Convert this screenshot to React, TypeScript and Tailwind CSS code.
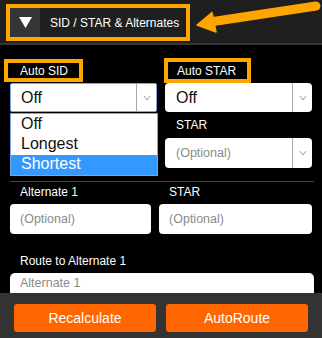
import React from "react";

function Chevron() {
  return (
    <svg width="8" height="6" viewBox="0 0 8 6" className="block">
      <polyline points="1,1 4,5 7,1" fill="none" stroke="#9a9a9a" strokeWidth="1" />
    </svg>
  );
}

export default function App() {
  return (
    <div className="relative w-[322px] h-[338px] overflow-hidden bg-black font-['Liberation_Sans',Arial,sans-serif] text-[12px]">
      {/* Header */}
      <div className="h-[45px] bg-[#1f1f1f] border-b-2 border-[#363636] pt-[4px] pl-[6px]">
        <div className="flex h-[37px] w-[184px] items-stretch border-[4px] border-[#ffa500]">
          <div className="flex w-[30px] items-center justify-center bg-[#353535]">
            <svg width="13" height="11" viewBox="0 0 13 11" className="block">
              <polygon points="0,0 13,0 6.5,11" fill="#ffffff" />
            </svg>
          </div>
          <div className="flex items-center pl-[10px] text-[12px] leading-[14px] text-white">
            SID / STAR &amp; Alternates
          </div>
        </div>
      </div>

      {/* Arrow annotation */}
      <svg
        className="absolute left-[190px] top-0"
        width="132"
        height="45"
        viewBox="0 0 132 45"
      >
        <line x1="20" y1="22" x2="126" y2="6" stroke="#ffa500" strokeWidth="9" strokeLinecap="round" />
        <polygon points="7,25 22,12.5 26,32" fill="#ffa500" stroke="#ffa500" strokeWidth="1.5" strokeLinejoin="round" />
      </svg>

      {/* Body */}
      <div className="h-[248px] overflow-hidden px-[10px]">
        {/* Auto label row */}
        <div className="flex h-[38px] items-start pt-[13px]">
          <div className="-ml-[6px] mt-[1px] flex h-[23px] w-[79px] items-center border-[4px] border-[#ffa500] bg-black pl-[12px] leading-[14px] text-white">
            Auto SID
          </div>
          <div className="ml-[81px] flex h-[25px] w-[87px] items-center border-[4px] border-[#ffa500] bg-black pl-[9px] leading-[14px] text-white">
            Auto STAR
          </div>
        </div>

        {/* Selects */}
        <div className="flex items-start gap-[8px]">
          <div className="w-[148px]">
            <div className="relative">
              <div className="flex h-[29px] items-stretch rounded-[2px] border border-[#7ea6e0] bg-white">
                <div className="flex flex-1 items-center pl-[10px] text-[16px] leading-[18px] text-[#111]">Off</div>
                <div className="flex w-[20px] items-center justify-center border-l border-[#a8a8a8]">
                  <Chevron />
                </div>
              </div>
              <div className="absolute left-0 top-full z-10 mt-[1px] w-[148px] border border-[#7ea6e0] bg-white pt-[1px] text-[16px] leading-[18px]">
                <div className="h-[20px] pl-[10px] text-[#111]">Off</div>
                <div className="h-[20px] pl-[10px] text-[#111]">Longest</div>
                <div className="h-[20px] bg-[#3399ff] pl-[10px] text-white">Shortest</div>
              </div>
            </div>
          </div>
          <div className="w-[148px]">
            <div className="flex h-[29px] items-stretch rounded-[4px] bg-white">
              <div className="flex flex-1 items-center pl-[11px] text-[16px] leading-[18px] text-[#111]">Off</div>
              <div className="flex w-[20px] items-center justify-center border-l border-[#a8a8a8]">
                <Chevron />
              </div>
            </div>
            <div className="mt-[6px] mb-[6px] pl-[11px] leading-[14px] text-white">STAR</div>
            <div className="flex h-[30px] items-stretch rounded-[4px] bg-white">
              <div className="flex flex-1 items-center pl-[11px] text-[12.5px] leading-[15px] text-[#8a8a8a]">(Optional)</div>
              <div className="flex w-[20px] items-center justify-center border-l border-[#a8a8a8]">
                <Chevron />
              </div>
            </div>
          </div>
        </div>

        {/* Separator */}
        <div className="mt-[13px] h-px w-[304px] bg-[#444]" />

        {/* Alternate row */}
        <div className="mt-[3px] flex gap-[8px]">
          <div className="w-[142px]">
            <div className="mb-[5px] pl-[10px] leading-[14px] text-white">Alternate 1</div>
            <div className="flex h-[30px] items-center rounded-[4px] bg-white pl-[10px] text-[12.5px] leading-[15px] text-[#8a8a8a]">
              (Optional)
            </div>
          </div>
          <div className="w-[154px]">
            <div className="mb-[5px] pl-[10px] leading-[14px] text-white">STAR</div>
            <div className="flex h-[30px] items-center rounded-[4px] bg-white pl-[10px] text-[12.5px] leading-[15px] text-[#8a8a8a]">
              (Optional)
            </div>
          </div>
        </div>

        {/* Route */}
        <div className="mt-[20px] mb-[5px] pl-[10px] leading-[14px] text-white">Route to Alternate 1</div>
        <div className="h-[40px] w-[304px] rounded-t-[5px] bg-white pl-[10px] pt-[3px] text-[12.5px] leading-[15px] text-[#8a8a8a]">
          Alternate 1
        </div>
      </div>

      {/* Bottom bar */}
      <div className="flex h-[45px] gap-[10px] bg-[#333333] px-[14px] pt-[11px]">
        <button className="flex h-[28px] w-[143px] items-center justify-center rounded-[3px] bg-[#ff6600] text-[14px] leading-[16px] text-white">
          Recalculate
        </button>
        <button className="flex h-[28px] w-[143px] items-center justify-center rounded-[3px] bg-[#ff6600] text-[14px] leading-[16px] text-white">
          AutoRoute
        </button>
      </div>
    </div>
  );
}
